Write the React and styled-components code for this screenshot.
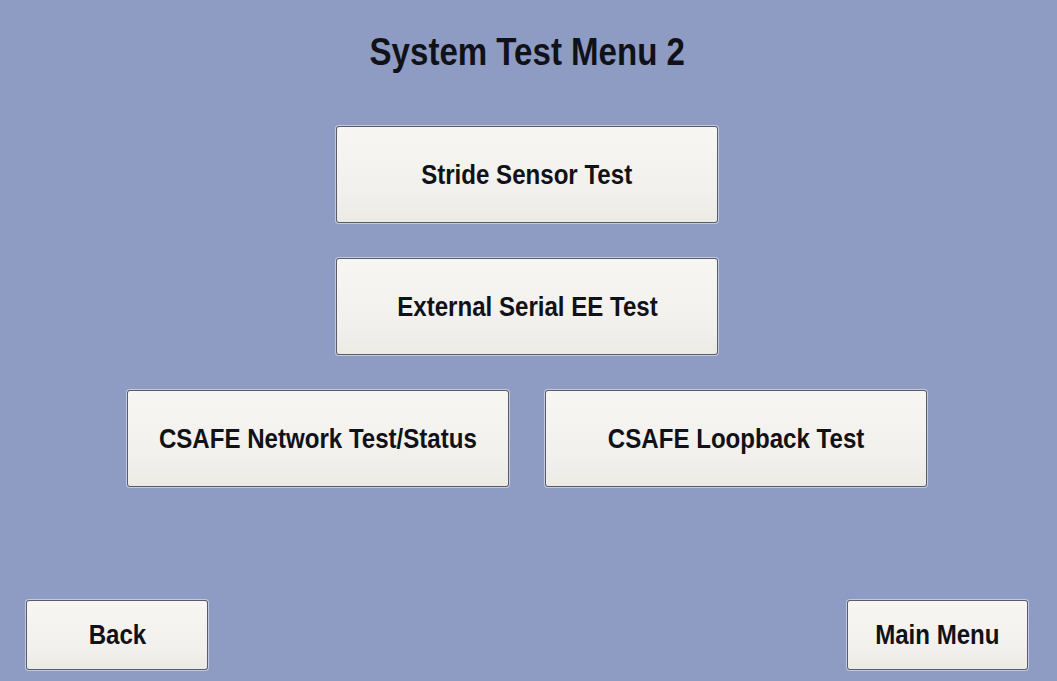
import styled, { createGlobalStyle } from 'styled-components';

const GlobalStyle = createGlobalStyle`
  html, body {
    margin: 0;
    padding: 0;
    background: #8e9bc3;
  }
`;

const Screen = styled.div`
  width: 1057px;
  height: 681px;
  box-sizing: border-box;
  background: #8e9bc3;
  display: flex;
  flex-direction: column;
  align-items: center;
  padding: 31px 29px 11px 26px;
  font-family: "Liberation Sans", Arial, sans-serif;
  font-weight: bold;
  color: #111118;
`;

// the panel font is a condensed bold sans, so squeeze Liberation Sans a bit
const Narrow = styled.span`
  display: inline-block;
  white-space: nowrap;
  transform: scaleX(${p => p.$sx || 0.86});
`;

const Title = styled.h1`
  margin: 0;
  height: 43px;
  line-height: 43px;
  font-size: 38px;
  font-weight: bold;
`;

const Menu = styled.div`
  margin-top: 52px;
  display: flex;
  flex-direction: column;
  align-items: center;
  gap: 35px;
`;

const Row = styled.div`
  display: flex;
  gap: 36px;
`;

const Button = styled.button`
  width: ${p => p.$w || 382}px;
  height: ${p => p.$h || 97}px;
  box-sizing: border-box;
  border: 1px solid #575c68;
  border-radius: 3px;
  box-shadow: 0 0 0 1px #c4cadf;
  background: linear-gradient(#f7f6f3, #f1f0ec 70%, #ebeae5);
  font-family: inherit;
  font-weight: bold;
  font-size: 28px;
  color: #111118;
  cursor: pointer;
  padding: 0;
  display: flex;
  align-items: center;
  justify-content: center;
`;

const BottomBar = styled.div`
  margin-top: auto;
  width: 100%;
  display: flex;
  justify-content: space-between;
`;

export default function App() {
  return (
    <>
      <GlobalStyle />
      <Screen>
        <Title><Narrow $sx={0.87}>System Test Menu 2</Narrow></Title>
        <Menu>
          <Button><Narrow>Stride Sensor Test</Narrow></Button>
          <Button><Narrow>External Serial EE Test</Narrow></Button>
          <Row>
            <Button><Narrow>CSAFE Network Test/Status</Narrow></Button>
            <Button><Narrow>CSAFE Loopback Test</Narrow></Button>
          </Row>
        </Menu>
        <BottomBar>
          <Button $w={182} $h={70}><Narrow>Back</Narrow></Button>
          <Button $w={181} $h={70}><Narrow>Main Menu</Narrow></Button>
        </BottomBar>
      </Screen>
    </>
  );
}
